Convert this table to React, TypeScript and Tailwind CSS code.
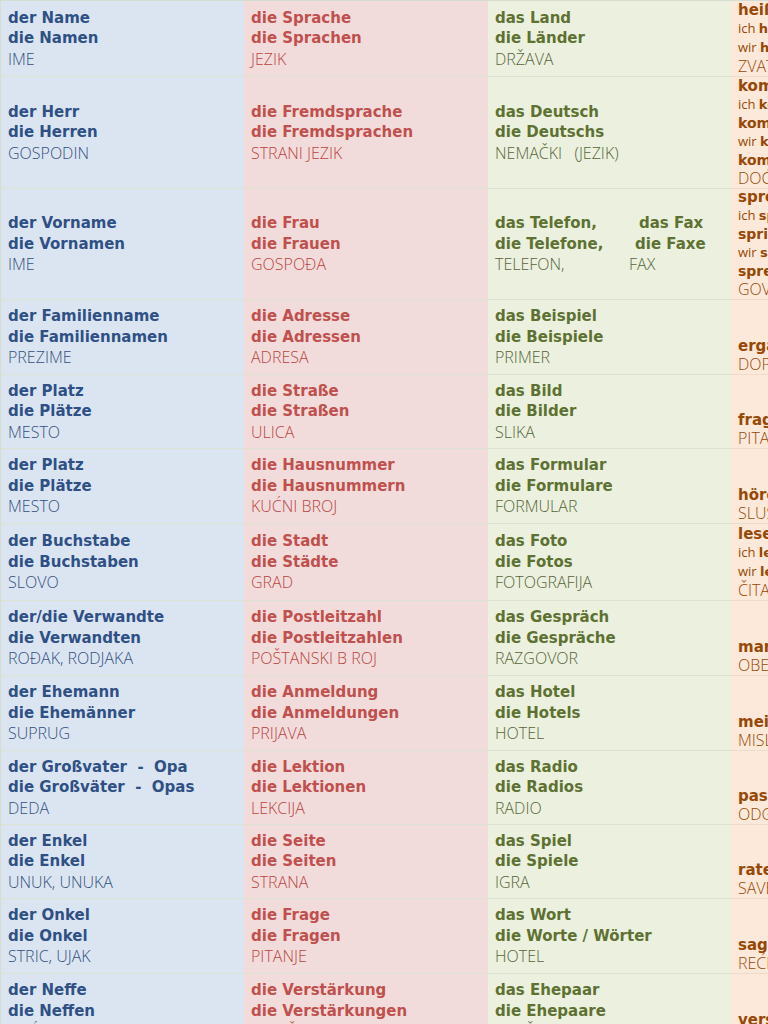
import React from "react";

type Cell = [string, string, string];

type Row = {
  h: string;
  m: Cell;
  f: Cell;
  n: Cell | "telefon";
  v: React.ReactNode;
};

const bold = "font-['DejaVu_Sans',sans-serif] font-bold text-[15px] leading-[20.5px]";
const light = "font-['Open_Sans',sans-serif] font-light text-[16px] leading-[20.5px] whitespace-pre";
const cellBase = "flex flex-col justify-center px-[7px] border-b border-[#dde3d2]";

const verbBold = "font-['DejaVu_Sans',sans-serif] font-bold text-[15px] leading-[18px] whitespace-nowrap";
const verbCont = "font-['DejaVu_Sans',sans-serif] font-bold text-[14px] leading-[18px] whitespace-nowrap";
const verbSmall = "font-['Open_Sans',sans-serif] text-[13px] leading-[18px] whitespace-nowrap";
const verbTr = "font-['Open_Sans',sans-serif] font-light text-[16px] leading-[19px] whitespace-nowrap";

type Line = { node: React.ReactNode; cont?: boolean };

function Verb({ inf, lines, tr }: { inf: string; lines?: Line[]; tr: string }) {
  return (
    <>
      <div className={verbBold}>{inf}</div>
      {lines?.map((l, i) => (
        <div key={i} className={l.cont ? verbCont : verbSmall}>
          {l.node}
        </div>
      ))}
      <div className={verbTr}>{tr}</div>
    </>
  );
}

const B = ({ children }: { children: React.ReactNode }) => (
  <b className="font-['DejaVu_Sans',sans-serif] font-bold">{children}</b>
);

const rows: Row[] = [
  {
    h: "h-[76px]",
    m: ["der Name", "die Namen", "IME"],
    f: ["die Sprache", "die Sprachen", "JEZIK"],
    n: ["das Land", "die Länder", "DRŽAVA"],
    v: (
      <Verb
        inf="heißen"
        lines={[
          { node: <>ich <B>heiße</B>, du <B>heißt</B>, er <B>heißt</B></> },
          { node: <>wir <B>heißen</B>, ihr <B>heißt</B>, sie <B>heißen</B></> },
        ]}
        tr="ZVATI SE"
      />
    ),
  },
  {
    h: "h-[112px]",
    m: ["der Herr", "die Herren", "GOSPODIN"],
    f: ["die Fremdsprache", "die Fremdsprachen", "STRANI JEZIK"],
    n: ["das Deutsch", "die Deutschs", "NEMAČKI   (JEZIK)"],
    v: (
      <Verb
        inf="kommen"
        lines={[
          { node: <>ich <B>komme</B>, du</> },
          { node: "kommst, er kommt", cont: true },
          { node: <>wir <B>kommen</B>, ihr</> },
          { node: "kommt, sie kommen", cont: true },
        ]}
        tr="DOĆI"
      />
    ),
  },
  {
    h: "h-[111px]",
    m: ["der Vorname", "die Vornamen", "IME"],
    f: ["die Frau", "die Frauen", "GOSPOĐA"],
    n: "telefon",
    v: (
      <Verb
        inf="sprechen"
        lines={[
          { node: <>ich <B>spreche</B>, du</> },
          { node: "sprichst, er spricht", cont: true },
          { node: <>wir <B>sprechen</B>, ihr</> },
          { node: "sprecht, sie sprechen", cont: true },
        ]}
        tr="GOVORITI"
      />
    ),
  },
  {
    h: "h-[75px]",
    m: ["der Familienname", "die Familiennamen", "PREZIME"],
    f: ["die Adresse", "die Adressen", "ADRESA"],
    n: ["das Beispiel", "die Beispiele", "PRIMER"],
    v: <Verb inf="ergänzen" tr="DOPUNITI" />,
  },
  {
    h: "h-[74px]",
    m: ["der Platz", "die Plätze", "MESTO"],
    f: ["die Straße", "die Straßen", "ULICA"],
    n: ["das Bild", "die Bilder", "SLIKA"],
    v: <Verb inf="fragen" tr="PITATI" />,
  },
  {
    h: "h-[75px]",
    m: ["der Platz", "die Plätze", "MESTO"],
    f: ["die Hausnummer", "die Hausnummern", "KUĆNI BROJ"],
    n: ["das Formular", "die Formulare", "FORMULAR"],
    v: <Verb inf="hören" tr="SLUŠATI" />,
  },
  {
    h: "h-[77px]",
    m: ["der Buchstabe", "die Buchstaben", "SLOVO"],
    f: ["die Stadt", "die Städte", "GRAD"],
    n: ["das Foto", "die Fotos", "FOTOGRAFIJA"],
    v: (
      <Verb
        inf="lesen"
        lines={[
          { node: <>ich <B>lese</B>, du <B>liest</B>, er <B>liest</B></> },
          { node: <>wir <B>lesen</B>, ihr <B>lest</B>, sie <B>lesen</B></> },
        ]}
        tr="ČITATI"
      />
    ),
  },
  {
    h: "h-[75px]",
    m: ["der/die Verwandte", "die Verwandten", "ROĐAK, RODJAKA"],
    f: ["die Postleitzahl", "die Postleitzahlen", "POŠTANSKI B ROJ"],
    n: ["das Gespräch", "die Gespräche", "RAZGOVOR"],
    v: <Verb inf="markieren" tr="OBELEŽITI" />,
  },
  {
    h: "h-[75px]",
    m: ["der Ehemann", "die Ehemänner", "SUPRUG"],
    f: ["die Anmeldung", "die Anmeldungen", "PRIJAVA"],
    n: ["das Hotel", "die Hotels", "HOTEL"],
    v: <Verb inf="meinen" tr="MISLITI" />,
  },
  {
    h: "h-[74px]",
    m: ["der Großvater  -  Opa", "die Großväter  -  Opas", "DEDA"],
    f: ["die Lektion", "die Lektionen", "LEKCIJA"],
    n: ["das Radio", "die Radios", "RADIO"],
    v: <Verb inf="passen" tr="ODGOVARATI" />,
  },
  {
    h: "h-[74px]",
    m: ["der Enkel", "die Enkel", "UNUK, UNUKA"],
    f: ["die Seite", "die Seiten", "STRANA"],
    n: ["das Spiel", "die Spiele", "IGRA"],
    v: <Verb inf="raten" tr="SAVETOVATI" />,
  },
  {
    h: "h-[75px]",
    m: ["der Onkel", "die Onkel", "STRIC, UJAK"],
    f: ["die Frage", "die Fragen", "PITANJE"],
    n: ["das Wort", "die Worte / Wörter", "HOTEL"],
    v: <Verb inf="sagen" tr="REĆI" />,
  },
  {
    h: "h-[75px]",
    m: ["der Neffe", "die Neffen", "NEĆAK"],
    f: ["die Verstärkung", "die Verstärkungen", "POJAČANJE"],
    n: ["das Ehepaar", "die Ehepaare", "BRAČNI PAR"],
    v: <Verb inf="verstehen" tr="RAZUMETI" />,
  },
];

function Noun({ cell, bg, strong, soft }: { cell: Cell; bg: string; strong: string; soft: string }) {
  return (
    <div className={`${cellBase} ${bg}`}>
      <div className={`${bold} ${strong} whitespace-pre`}>{cell[0]}</div>
      <div className={`${bold} ${strong} whitespace-pre`}>{cell[1]}</div>
      <div className={`${light} ${soft}`}>{cell[2]}</div>
    </div>
  );
}

function Telefon() {
  const strong = "text-[#5e7132]";
  const soft = "text-[#56643a]";
  return (
    <div className={`${cellBase} bg-[#ebf1de]`}>
      <div className="flex">
        <span className={`${bold} ${strong} w-[144px]`}>das Telefon,</span>
        <span className={`${bold} ${strong}`}>das Fax</span>
      </div>
      <div className="flex">
        <span className={`${bold} ${strong} w-[140px]`}>die Telefone,</span>
        <span className={`${bold} ${strong}`}>die Faxe</span>
      </div>
      <div className="flex">
        <span className={`${light} ${soft} w-[134px]`}>TELEFON,</span>
        <span className={`${light} ${soft}`}>FAX</span>
      </div>
    </div>
  );
}

export default function App() {
  return (
    <div className="w-[768px] h-[1024px] overflow-hidden bg-white">
      <div className="w-[974px] border-t border-l border-[#d5ddd0]">
        {rows.map((r, i) => (
          <div key={i} className={`grid grid-cols-[243px_244px_243px_244px] ${r.h}`}>
            <Noun cell={r.m} bg="bg-[#dbe5f1]" strong="text-[#2f5085]" soft="text-[#34507e]" />
            <Noun cell={r.f} bg="bg-[#f2dcdb]" strong="text-[#c0504d]" soft="text-[#b8443f]" />
            {r.n === "telefon" ? (
              <Telefon />
            ) : (
              <Noun cell={r.n} bg="bg-[#ebf1de]" strong="text-[#5e7132]" soft="text-[#56643a]" />
            )}
            <div className="flex flex-col justify-end px-[7px] border-b border-[#ecdccd] bg-[#fde9d9] text-[#974806] overflow-hidden">
              {r.v}
            </div>
          </div>
        ))}
      </div>
    </div>
  );
}
